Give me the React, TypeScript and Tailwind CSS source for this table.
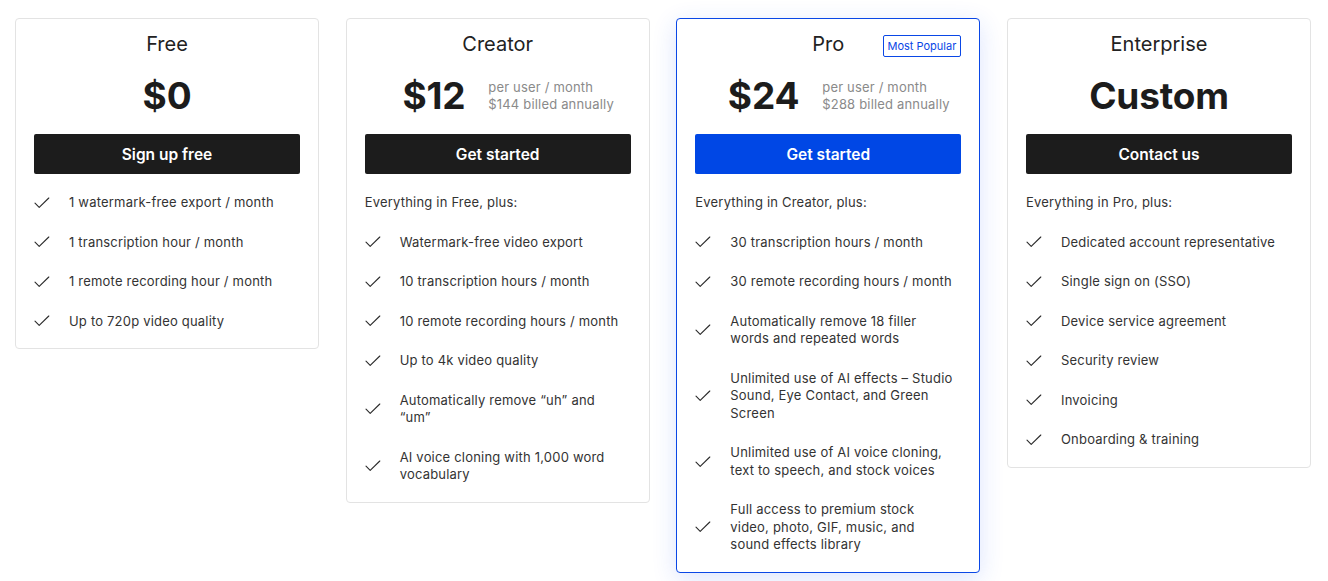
import React from "react";

type Plan = {
  name: string;
  price: string;
  perUser?: string;
  billed?: string;
  cta: string;
  highlight?: boolean;
  intro?: string;
  features: string[];
};

const plans: Plan[] = [
  {
    name: "Free",
    price: "$0",
    cta: "Sign up free",
    features: [
      "1 watermark-free export / month",
      "1 transcription hour / month",
      "1 remote recording hour / month",
      "Up to 720p video quality",
    ],
  },
  {
    name: "Creator",
    price: "$12",
    perUser: "per user / month",
    billed: "$144 billed annually",
    cta: "Get started",
    intro: "Everything in Free, plus:",
    features: [
      "Watermark-free video export",
      "10 transcription hours / month",
      "10 remote recording hours / month",
      "Up to 4k video quality",
      "Automatically remove \u201Cuh\u201D and \u201Cum\u201D",
      "AI voice cloning with 1,000 word vocabulary",
    ],
  },
  {
    name: "Pro",
    price: "$24",
    perUser: "per user / month",
    billed: "$288 billed annually",
    cta: "Get started",
    highlight: true,
    intro: "Everything in Creator, plus:",
    features: [
      "30 transcription hours / month",
      "30 remote recording hours / month",
      "Automatically remove 18 filler words and repeated words",
      "Unlimited use of AI effects \u2013 Studio Sound, Eye Contact, and Green Screen",
      "Unlimited use of AI voice cloning, text to speech, and stock voices",
      "Full access to premium stock video, photo, GIF, music, and sound effects library",
    ],
  },
  {
    name: "Enterprise",
    price: "Custom",
    cta: "Contact us",
    intro: "Everything in Pro, plus:",
    features: [
      "Dedicated account representative",
      "Single sign on (SSO)",
      "Device service agreement",
      "Security review",
      "Invoicing",
      "Onboarding & training",
    ],
  },
];

function Check() {
  return (
    <svg width="16" height="12" viewBox="0 0 16 12" fill="none" className="shrink-0">
      <path d="M1 6.2 L5.2 10.4 L14.8 1" stroke="#2a2a2a" strokeWidth="1.1" strokeLinecap="round" strokeLinejoin="round" />
    </svg>
  );
}

function PlanCard({ plan }: { plan: Plan }) {
  return (
    <div
      className={
        "relative rounded-[4px] bg-white px-[18px] pt-[11px] pb-[18px] " +
        (plan.highlight
          ? "border border-[#0a47e6] shadow-[0_6px_24px_rgba(40,90,240,0.16)]"
          : "border border-[#e3e3e3]")
      }
    >
      {plan.highlight && (
        <div className="absolute right-[18px] top-[16px] rounded-[2px] border border-[#0a47e6] px-[4px] h-[22px] flex items-center text-[11px] text-[#0a47e6]">
          Most Popular
        </div>
      )}
      <div className="text-center text-[20px] leading-[28px] text-[#222]">{plan.name}</div>
      <div
        className={
          "mt-[19px] flex items-center justify-center gap-[23px] h-[38px] " + (plan.perUser ? "pl-[21px]" : "")
        }
      >
        <div className="text-[37px] leading-[38px] font-bold text-[#1c1c1c] tracking-[-0.2px]">{plan.price}</div>
        {plan.perUser && (
          <div className="text-[13px] leading-[17px] tracking-[0.18px] text-[#8a8a8a]">
            <div>{plan.perUser}</div>
            <div>{plan.billed}</div>
          </div>
        )}
      </div>
      <button
        className={
          "mt-[19px] w-full h-[40px] pt-[2px] rounded-[2px] text-[15.5px] font-semibold text-white " +
          (plan.highlight ? "bg-[#0047e5]" : "bg-[#1c1c1c]")
        }
      >
        {plan.cta}
      </button>
      <div className="mt-[20px] flex flex-col gap-[22px] text-[13px] leading-[17.5px] tracking-[0.2px] text-[#333]">
        {plan.intro && <div>{plan.intro}</div>}
        {plan.features.map((f) => (
          <div key={f} className="flex items-center gap-[19px]">
            <Check />
            <div className="max-w-[224px]">{f}</div>
          </div>
        ))}
      </div>
    </div>
  );
}

export default function App() {
  return (
    <div
      className="min-h-[581px] bg-white pt-[18px] pl-[15px] pr-[17px]"
      style={{ fontFamily: "Inter, 'Noto Sans', sans-serif" }}
    >
      <div className="grid grid-cols-4 gap-[26.67px] items-start">
        {plans.map((p) => (
          <PlanCard key={p.name} plan={p} />
        ))}
      </div>
    </div>
  );
}
